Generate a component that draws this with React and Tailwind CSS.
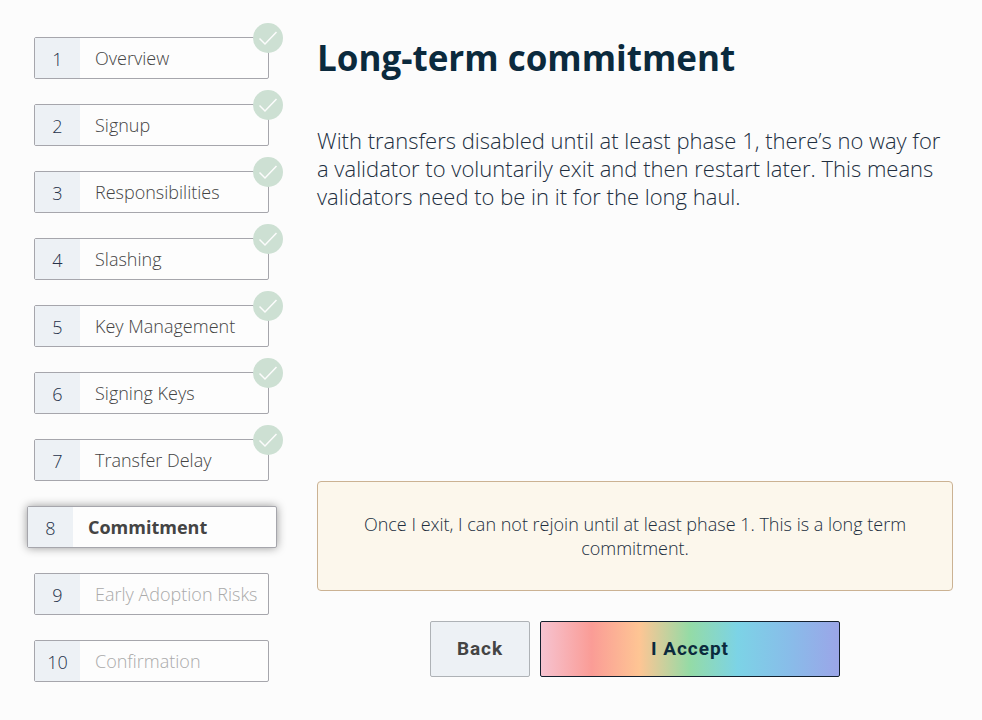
import React from "react";

const steps = [
  { label: "Overview", status: "done" },
  { label: "Signup", status: "done" },
  { label: "Responsibilities", status: "done" },
  { label: "Slashing", status: "done" },
  { label: "Key Management", status: "done" },
  { label: "Signing Keys", status: "done" },
  { label: "Transfer Delay", status: "done" },
  { label: "Commitment", status: "active" },
  { label: "Early Adoption Risks", status: "todo" },
  { label: "Confirmation", status: "todo" },
];

const boxStyles = {
  done: "w-full text-[#444444]",
  active:
    "-mx-[7px] w-[250px] text-[#444444] shadow-[0_0_10px_rgba(0,0,0,0.4)]",
  todo: "w-full text-[#aaaaaa]",
};

function CheckBadge() {
  return (
    <span className="absolute -top-[15px] -right-[15px] flex size-[30px] items-center justify-center rounded-full bg-[#cde0d3]">
      <svg
        viewBox="0 0 30 30"
        className="size-[30px]"
        fill="none"
        stroke="#fcfcfc"
        strokeWidth="1.5"
        aria-hidden="true"
      >
        <path d="M6.5 15.5L12 21L23.5 9" />
      </svg>
    </span>
  );
}

function Step({ number, label, status }) {
  return (
    <li>
      <button
        type="button"
        disabled={status === "todo"}
        aria-current={status === "active" ? "step" : undefined}
        className={`relative flex h-[42px] items-stretch rounded-xs border border-[#a6a6ac] bg-[#fdfdfd] text-left text-lg ${boxStyles[status]}`}
      >
        <span className="flex w-[45px] shrink-0 items-center justify-center bg-[#edf1f5] pt-0.5 font-light text-[#26324a]">
          {number}
        </span>
        <span
          className={`self-center pl-[15px] whitespace-nowrap ${
            status === "active" ? "font-bold" : "font-light"
          }`}
        >
          {label}
        </span>
        {status === "done" && <CheckBadge />}
      </button>
    </li>
  );
}

export default function App() {
  return (
    <div className="flex min-h-screen items-start bg-[#fcfcfc] pt-[37px] pr-[29px] pb-[38px] pl-[34px] font-['Open_Sans','Noto_Sans',sans-serif]">
      <div className="flex w-full gap-12">
        <nav aria-label="Steps" className="w-[235px] shrink-0">
          <ol className="flex flex-col gap-[25px]">
            {steps.map((step, i) => (
              <Step key={step.label} number={i + 1} {...step} />
            ))}
          </ol>
        </nav>
        <main className="flex min-w-0 flex-1 flex-col pb-[5px]">
          <h1 className="text-[35px] leading-[41px] font-bold text-[#0b2a3d]">
            Long-term commitment
          </h1>
          <p className="mt-12 flex-1 text-[22px] leading-7 font-light text-[#212e3e]">
            With transfers disabled until at least phase 1, there’s no way for a
            validator to voluntarily exit and then restart later. This means
            validators need to be in it for the long haul.
          </p>
          <div className="rounded-sm border border-[#cbb293] bg-[#fcf7ec] px-10 py-[30px] text-center text-lg leading-6 font-light text-[#212e3e]">
            Once I exit, I can not rejoin until at least phase 1. This is a long
            term commitment.
          </div>
          <div className="mt-[30px] flex justify-center gap-[10px] font-[Roboto,sans-serif] text-[19px] font-bold">
            <button
              type="button"
              className="h-14 w-[100px] rounded-xs border border-[#aeb2b6] bg-[#edf1f5] tracking-wider text-[#444444]"
            >
              Back
            </button>
            <button
              type="button"
              className="h-14 w-[300px] rounded-xs border border-[#14202e] bg-[linear-gradient(90deg,#f6c3d0_0%,#fa9c96_17%,#fec594_33%,#94dba6_50%,#7cd3e6_66%,#88bde9_83%,#9ba5e8_100%)] tracking-wider text-[#0b2a3d]"
            >
              I Accept
            </button>
          </div>
        </main>
      </div>
    </div>
  );
}
